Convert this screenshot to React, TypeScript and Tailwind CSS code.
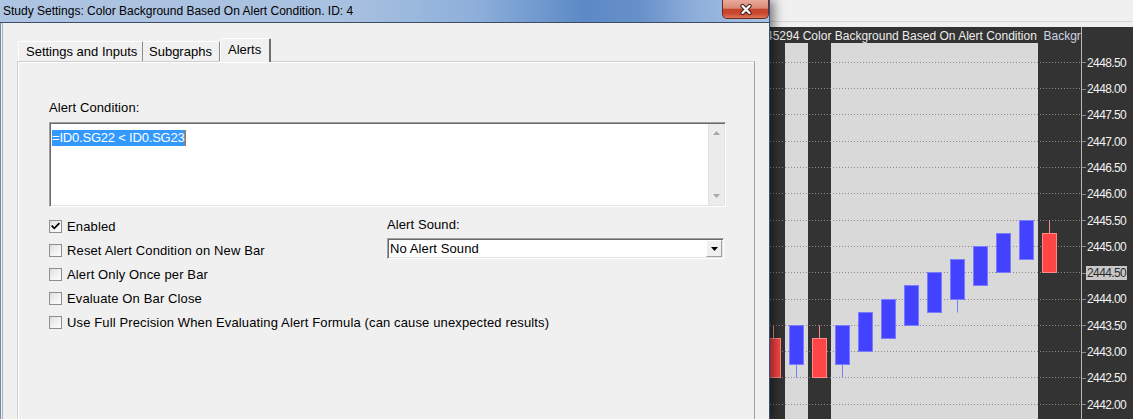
import React from "react";

const prices = [2448.5, 2448, 2447.5, 2447, 2446.5, 2446, 2445.5, 2445, 2444.5, 2444, 2443.5, 2443, 2442.5, 2442];

type Candle = { c: number; o: number; cl: number; h?: number; l?: number };
const candles: Candle[] = [
  { c: 773, o: 2443.25, cl: 2442.5, h: 2443.5 },
  { c: 796, o: 2442.75, cl: 2443.5, l: 2442.5 },
  { c: 819, o: 2443.25, cl: 2442.5, h: 2443.5 },
  { c: 842, o: 2442.75, cl: 2443.5, l: 2442.5 },
  { c: 865, o: 2443, cl: 2443.75 },
  { c: 888, o: 2443.25, cl: 2444 },
  { c: 911, o: 2443.5, cl: 2444.25 },
  { c: 934, o: 2443.75, cl: 2444.5 },
  { c: 957, o: 2444, cl: 2444.75, l: 2443.75 },
  { c: 980, o: 2444.25, cl: 2445 },
  { c: 1003, o: 2444.5, cl: 2445.25 },
  { c: 1026, o: 2444.75, cl: 2445.5 },
  { c: 1049, o: 2445.25, cl: 2444.5, h: 2445.5 },
];

const yOf = (p: number) => 150.3 + (2446 - p) * 52.6;
const py = (p: number) => Math.round(yOf(p)) + 0.5;

function Checkbox({ checked, label }: { checked?: boolean; label: string }) {
  return (
    <div className="flex h-[24px] items-center gap-[5px] whitespace-nowrap">
      <div className="flex h-[13px] w-[13px] shrink-0 items-center justify-center border border-[#8f8f8f] bg-[linear-gradient(135deg,#dedede_0%,#f2f2f2_55%,#fcfcfc_100%)]">
        {checked && (
          <svg width="11" height="11" viewBox="0 0 11 11">
            <path d="M2.2 5.2 L4.3 7.4 L8.8 2.8" fill="none" stroke="#000" strokeWidth="1.7" strokeLinecap="square" />
          </svg>
        )}
      </div>
      <span className="text-[13px] leading-[15px] tracking-[0.13px] text-black">{label}</span>
    </div>
  );
}

function Chart() {
  return (
    <div className="flex flex-1 flex-col">
      <div className="h-[21px] bg-[#f0f0f0]" />
      <div className="h-px bg-[#d6d6d6]" />
      <div className="h-[5px] bg-[#f0f0f0]" />
      <div className="flex flex-1 bg-[#333333]">
        <div className="flex w-[311px] shrink-0 flex-col overflow-hidden">
          <div className="ml-[-4px] h-[16px] whitespace-pre pt-[2px] text-[12px] leading-[14px] text-[#ededed]">
            45294 Color Background Based On Alert Condition<span className="text-[#cdd3e2]">  Backgro</span>
          </div>
          <svg width="311" height="376" viewBox="0 0 311 376" className="block">
            <rect x="15" y="0" width="23" height="376" fill="#d9d9d9" />
            <rect x="61" y="0" width="207" height="376" fill="#d9d9d9" />
            {prices.map((p) => (
              <line key={p} x1="0" x2="311" y1={py(p)} y2={py(p)} stroke="#8a8a8a" strokeWidth="1" strokeDasharray="1 2" />
            ))}
            {candles.map((k, i) => {
              const up = k.cl > k.o;
              const top = Math.max(k.o, k.cl);
              const bot = Math.min(k.o, k.cl);
              const hi = k.h ?? top;
              const lo = k.l ?? bot;
              const x = k.c - 770;
              const fill = up ? "#4343ff" : "#ff4545";
              const stroke = up ? "#7b7bff" : "#ff8a8a";
              return (
                <g key={i}>
                  {hi > top && <line x1={x + 0.5} x2={x + 0.5} y1={py(hi)} y2={py(top)} stroke={stroke} />}
                  {lo < bot && <line x1={x + 0.5} x2={x + 0.5} y1={py(bot)} y2={py(lo)} stroke={stroke} />}
                  <rect x={x - 6.5} y={py(top)} width="14" height={py(bot) - py(top)} fill={fill} stroke={stroke} strokeWidth="1" />
                </g>
              );
            })}
          </svg>
        </div>
        <div className="flex flex-1 flex-col border-l border-[#b8b8b8] pt-[22.6px]">
          {prices.map((p) => {
            const cur = p === 2444.5;
            return (
              <div key={p} className="flex h-[26.3px] shrink-0 items-center">
                <div className="h-px w-[4px] bg-[#8a8a8a]" />
                <span
                  className={
                    cur
                      ? "bg-[#c8c8c8] px-[1px] text-[12px] leading-[14px] tracking-[-0.6px] text-[#2c2c2c]"
                      : "px-[1px] text-[12px] leading-[14px] tracking-[-0.6px] text-[#f2f2f2]"
                  }
                >
                  {p.toFixed(2)}
                </span>
              </div>
            );
          })}
        </div>
      </div>
    </div>
  );
}

function Dialog() {
  return (
    <div className="relative z-10 flex w-[770px] shrink-0 flex-col border-r border-[#34507c] shadow-[4px_0_10px_rgba(0,0,0,0.5)]">
      <div className="flex h-[22px] items-start justify-between bg-[linear-gradient(90deg,#adc4e2_0%,#a9c1e0_45%,#8dafda_62%,#5c89c5_76%,#6690c9_83%,#91b1db_91%,#a6c1e2_100%)]">
        <span className="whitespace-nowrap pl-[3px] pt-[4px] text-[12px] leading-[14px] text-black">
          Study Settings: Color Background Based On Alert Condition. ID: 4
        </span>
        <div className="flex h-[19px] w-[47px] items-center justify-center rounded-b-[5px] border border-t-0 border-[#6b2b22] bg-[linear-gradient(180deg,#e9aa9c_0%,#dc8a77_45%,#c4452c_52%,#c9482f_75%,#de7656_100%)]">
          <svg width="14" height="11" viewBox="0 0 14 11">
            <path d="M3.5 2 L10.5 9 M10.5 2 L3.5 9" stroke="#3e1a16" strokeWidth="4.2" strokeLinecap="round" />
            <path d="M3.5 2 L10.5 9 M10.5 2 L3.5 9" stroke="#ffffff" strokeWidth="2.3" strokeLinecap="round" />
          </svg>
        </div>
      </div>
      <div className="h-px bg-[#3e4d63]" />
      <div className="flex flex-1 border-l border-[#6e8cb8] bg-[#f0f0f0]">
        <div className="ml-px flex flex-1 flex-col border-l border-[#b3b3b3] px-[14px]">
          <div className="flex h-[38px] items-end pl-px">
            <div className="flex h-[20px] w-[125px] items-center whitespace-nowrap rounded-tl-[2px] border-l border-t border-white border-r-[#8a8a8a] border-r pl-[7px] text-[13px] leading-[15px] text-black">
              Settings and Inputs
            </div>
            <div className="flex h-[20px] w-[77px] items-center whitespace-nowrap border-t border-white border-r border-r-[#8a8a8a] pl-[6px] text-[13px] leading-[15px] text-black">
              Subgraphs
            </div>
            <div className="relative z-10 mb-[-1px] flex h-[24px] w-[51px] items-center whitespace-nowrap rounded-t-[2px] border-l border-t border-white border-r-2 border-r-[#6e6e6e] bg-[#f0f0f0] pl-[7px] pb-[2px] text-[13px] leading-[15px] text-black">
              Alerts
            </div>
          </div>
          <div className="flex-1 border-l border-r border-t border-[#cfcfcf] border-r-[#a0a0a0] pl-[31px] pt-[38px] shadow-[inset_1px_1px_0_#ffffff]">
            <div className="text-[13px] leading-[15px] tracking-[0.1px] text-black">Alert Condition:</div>
            <div className="mt-[7px] flex h-[85px] w-[677px] border border-[#a0a0a0] border-b-white border-r-white bg-white shadow-[inset_1px_1px_0_#696969,inset_-1px_-1px_0_#e3e3e3]">
              <div className="flex-1 pl-[2px] pt-[2px]">
                <span className="inline-block border-r border-[#d46a00] bg-[#3399ff] text-[13px] leading-[16px] tracking-[-0.2px] text-white">
                  =ID0.SG22 &lt; ID0.SG23
                </span>
              </div>
              <div className="my-px mr-px flex w-[16px] flex-col justify-between border-l border-[#e2e2e2] bg-[#ececec]">
                <div className="flex h-[17px] items-center justify-center">
                  <svg width="7" height="4" viewBox="0 0 7 4">
                    <path d="M0 4 L3.5 0 L7 4 Z" fill="#a8a8a8" />
                  </svg>
                </div>
                <div className="flex h-[17px] items-center justify-center pb-px">
                  <svg width="7" height="4" viewBox="0 0 7 4">
                    <path d="M0 0 L7 0 L3.5 4 Z" fill="#a8a8a8" />
                  </svg>
                </div>
              </div>
            </div>
            <div className="mt-[7px] flex">
              <div className="flex w-[338px] flex-col">
                <Checkbox checked label="Enabled" />
                <Checkbox label="Reset Alert Condition on New Bar" />
                <Checkbox label="Alert Only Once per Bar" />
                <Checkbox label="Evaluate On Bar Close" />
                <Checkbox label="Use Full Precision When Evaluating Alert Formula (can cause unexpected results)" />
              </div>
              <div className="flex flex-col pt-[3px]">
                <div className="text-[13px] leading-[15px] tracking-[0.1px] text-black">Alert Sound:</div>
                <div className="mt-[6px] flex h-[21px] w-[337px] items-stretch border border-[#a0a0a0] border-b-white border-r-white bg-white shadow-[inset_1px_1px_0_#696969,inset_-1px_-1px_0_#e3e3e3]">
                  <div className="flex flex-1 items-center pl-[2px] text-[13px] leading-[15px] tracking-[0.1px] text-black">No Alert Sound</div>
                  <div className="my-px mr-px flex w-[16px] items-center justify-center border border-[#ffffff] border-b-[#a0a0a0] border-r-[#a0a0a0] bg-[#f0f0f0]">
                    <svg width="7" height="4" viewBox="0 0 7 4">
                      <path d="M0 0 L7 0 L3.5 4 Z" fill="#000" />
                    </svg>
                  </div>
                </div>
              </div>
            </div>
          </div>
        </div>
      </div>
    </div>
  );
}

export default function App() {
  return (
    <div className="flex h-[419px] w-[1133px] overflow-hidden bg-[#f0f0f0] font-['Liberation_Sans',Arial,sans-serif]">
      <Dialog />
      <Chart />
    </div>
  );
}
